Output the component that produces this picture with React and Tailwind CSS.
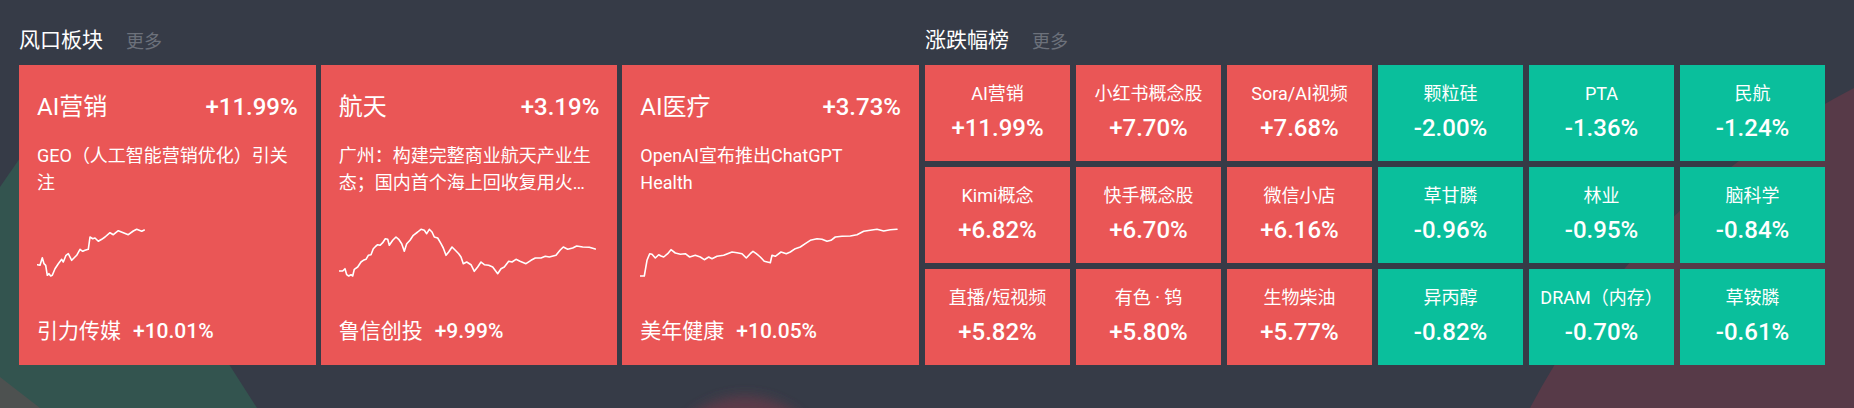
import React from "react";

const hotCards = [
  {
    name: "AI营销",
    change: "+11.99%",
    desc: "GEO（人工智能营销优化）引关注",
    leader: "引力传媒",
    leaderChange: "+10.01%",
    ox: 37,
    points: [
      [37.3, 264.7], [40, 265.3], [42.3, 257.7], [44, 263.7], [45.7, 265.3], [47.3, 275.3], [49, 273.7],
      [50.7, 276], [52.3, 275.3], [55, 268.7], [58.3, 263.7], [61.7, 259.3], [63.3, 262], [66, 255.3],
      [68.3, 253.7], [71.7, 260.3], [76.7, 255.3], [80, 249.3], [82.7, 251.3], [85, 250.3], [88.3, 249.3],
      [90, 237], [92.7, 238.7], [95, 238], [98.3, 241.3], [101.7, 239.3], [105, 237], [110, 232.7],
      [113.3, 234.7], [118.3, 230.7], [123.3, 232.7], [128.3, 234.7], [133.3, 231], [136.7, 229.3],
      [141.7, 231.3], [144.3, 230],
    ],
  },
  {
    name: "航天",
    change: "+3.19%",
    desc: "广州：构建完整商业航天产业生态；国内首个海上回收复用火箭成功发射",
    leader: "鲁信创投",
    leaderChange: "+9.99%",
    ox: 338,
    points: [
      [337.7, 271], [341.7, 271], [344, 268.7], [345.7, 274.7], [347.7, 276], [350, 274.7], [351.7, 276],
      [353.3, 269.3], [356.7, 267], [360, 262], [362.3, 260.3], [365, 259.3], [367.3, 255.3], [370, 254.7],
      [372.3, 248.7], [375, 246], [376.7, 244.7], [379, 245.3], [381.7, 242.7], [384.3, 238.7], [386.7, 239.3],
      [388.3, 245.3], [391.7, 240.3], [395, 237], [397.7, 239.3], [400.7, 243.7], [403.3, 251.3], [405.7, 243.7],
      [409, 240.3], [412.3, 235.3], [416.7, 232], [420, 229.3], [423.3, 230.3], [425.7, 233.7], [428.3, 229.3],
      [431, 232], [433.3, 237], [436.7, 238], [440, 243.7], [442.3, 248], [445, 255.3], [447.7, 252],
      [451, 247], [454.3, 250.3], [457.7, 253.7], [460, 257], [462.3, 263.7], [465.7, 262], [470, 264.7],
      [473.3, 271.3], [476.7, 267], [480, 262], [483.3, 264.7], [487.7, 265.3], [491.7, 267], [496.7, 273.7],
      [500, 268.7], [503.3, 267], [507.7, 261.3], [511, 262], [515, 259.3], [519, 261.3], [525, 263.7],
      [530, 260.3], [534.3, 258], [540, 258], [544.3, 256.3], [548.3, 257], [555, 255.3], [559, 250.3],
      [562.3, 247], [566.7, 249.3], [571.7, 248], [575.7, 246], [581.7, 247], [588.3, 247.3], [594.3, 249],
    ],
  },
  {
    name: "AI医疗",
    change: "+3.73%",
    desc: "OpenAI宣布推出ChatGPT\nHealth",
    leader: "美年健康",
    leaderChange: "+10.05%",
    ox: 640,
    points: [
      [640.3, 276], [644.3, 276], [647, 260.3], [649.7, 253.7], [652, 254.3], [655.3, 258], [658.7, 254.7],
      [661, 256], [663.7, 257], [667.7, 253.7], [671, 249.7], [675.3, 253], [680.3, 254.3], [685.3, 253.7],
      [689.7, 257], [695.3, 255.3], [700.3, 257], [704.3, 259.7], [708.7, 257], [712, 258.7], [717, 256.3],
      [723.7, 255.3], [732, 252], [737, 252.7], [742, 253.7], [746.3, 258], [750.3, 253.7], [753, 251.3],
      [756.3, 253.7], [760.3, 257], [764.3, 261.3], [770.3, 262.7], [772, 255.3], [775.3, 256.3], [781, 252],
      [786.3, 253.7], [790.3, 252], [795.3, 248.7], [800.3, 247], [805.3, 243.7], [810.3, 240.3], [817, 238.7],
      [822, 239.3], [827, 241.3], [831, 240.3], [835.3, 237], [842, 236.3], [850.3, 236], [857, 234.7],
      [863.7, 231.3], [870.3, 230.3], [877, 229.3], [883.7, 231], [890.3, 229.7], [897, 229.3],
    ],
  },
];

const ranks = [
  ["AI营销", "+11.99%", true], ["小红书概念股", "+7.70%", true], ["Sora/AI视频", "+7.68%", true],
  ["颗粒硅", "-2.00%", false], ["PTA", "-1.36%", false], ["民航", "-1.24%", false],
  ["Kimi概念", "+6.82%", true], ["快手概念股", "+6.70%", true], ["微信小店", "+6.16%", true],
  ["草甘膦", "-0.96%", false], ["林业", "-0.95%", false], ["脑科学", "-0.84%", false],
  ["直播/短视频", "+5.82%", true], ["有色 · 钨", "+5.80%", true], ["生物柴油", "+5.77%", true],
  ["异丙醇", "-0.82%", false], ["DRAM（内存）", "-0.70%", false], ["草铵膦", "-0.61%", false],
];

const Spark = ({ points, ox }) => (
  <svg width="261" height="50" viewBox="0 0 261 50" className="block">
    <polyline
      points={points.map(([x, y]) => `${(x - ox).toFixed(1)},${(y - 228).toFixed(1)}`).join(" ")}
      fill="none"
      stroke="#ffffff"
      strokeWidth="1.6"
      strokeLinejoin="round"
      strokeLinecap="round"
    />
  </svg>
);

const SectionHead = ({ title }) => (
  <div className="flex items-center h-[30px] mb-[9px]">
    <span className="text-[21px] text-white">{title}</span>
    <span className="ml-[23px] text-[18px] text-[#6c717b]">更多</span>
  </div>
);

export default function App() {
  return (
    <div
      className="relative w-full h-[408px] overflow-hidden bg-[#363b47]"
      style={{ fontFamily: 'Roboto, "Noto Sans CJK SC", sans-serif' }}
    >
      <svg className="absolute inset-0" width="1854" height="408" viewBox="0 0 1854 408">
        <defs>
          <filter id="soft" x="-50%" y="-50%" width="200%" height="200%">
            <feGaussianBlur stdDeviation="6" />
          </filter>
        </defs>
        <polygon points="0,187 60,100 257,408 0,408" fill="#33544f" />
        <polygon points="0,377 40,408 0,408" fill="#4d5150" />
        <path d="M1530 408 Q1640 200 1854 88 L1854 408 Z" fill="#573a48" />
        <ellipse cx="745" cy="470" rx="80" ry="74" fill="#5b3b48" filter="url(#soft)" />
      </svg>

      <div className="relative flex gap-[6px] pl-[19px] pt-[26px]">
        <section className="w-[900px]">
          <SectionHead title="风口板块" />
          <div className="grid grid-cols-3 gap-[5px]">
            {hotCards.map((c) => (
              <div key={c.name} className="h-[300px] bg-[#ea5656] px-[18px] pt-[26px] text-white">
                <div className="flex h-[32px] items-center justify-between">
                  <span className="text-[24px]">{c.name}</span>
                  <span className="text-[24px] font-medium">{c.change}</span>
                </div>
                <p className="mt-[19px] h-[54px] text-[18px] leading-[27px] whitespace-pre-line line-clamp-2">{c.desc}</p>
                <div className="mt-[32px] h-[50px]">
                  <Spark points={c.points} ox={c.ox} />
                </div>
                <div className="mt-[40px] flex h-[28px] items-center">
                  <span className="text-[21px]">{c.leader}</span>
                  <span className="ml-3 text-[21px] font-medium">{c.leaderChange}</span>
                </div>
              </div>
            ))}
          </div>
        </section>

        <section className="w-[900px]">
          <SectionHead title="涨跌幅榜" />
          <div className="grid grid-cols-6 grid-rows-3 gap-[6px] h-[300px]">
            {ranks.map(([name, pct, up]) => (
              <div
                key={name}
                className={`flex flex-col items-center justify-center text-white ${up ? "bg-[#ea5656]" : "bg-[#0abf9c]"}`}
              >
                <span className="text-[18px] leading-[24px] whitespace-nowrap">{name}</span>
                <span className="mt-[6px] text-[24px] leading-[32px] font-medium">{pct}</span>
              </div>
            ))}
          </div>
        </section>
      </div>
    </div>
  );
}
